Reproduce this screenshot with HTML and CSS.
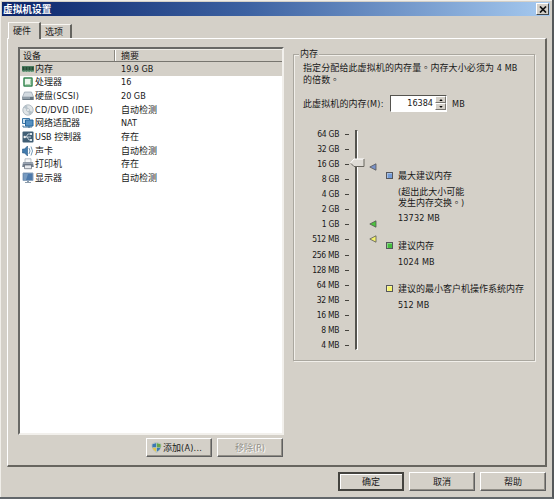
FILE: index.html
```html
<!DOCTYPE html>
<html lang="zh-CN">
<head>
<meta charset="utf-8">
<title>虚拟机设置</title>
<link rel="stylesheet" href="styles.css">
</head>
<body>
<div class="window">
  <header class="titlebar"><h1>虚拟机设置</h1>
    <button class="close" aria-label="关闭"><svg width="8" height="7" viewBox="0 0 8 7"><path d="M1 .5 7 6.5M7 .5 1 6.5" stroke="#111" stroke-width="1.7"/></svg></button>
  </header>
  <nav class="tabs"><div class="tab active">硬件</div><div class="tab">选项</div></nav>
  <main class="panel">
    <section class="left">
      <div class="list">
        <div class="head"><span class="dev">设备</span><span class="sum">摘要</span></div>
        <div class="row selected"><svg class="icon" viewBox="0 0 12 12"><path fill="#4b7b5f" d="M0 3h12v6H0z"/><path stroke="#244b35" stroke-width="2" d="M1.5 4v3M4.5 4v3M7.5 4v3M10.5 4v3"/><path stroke="#91b69c" d="M0 8.5h12" stroke-dasharray="1 .6"/></svg><span class="dev">内存</span><span>19.9 GB</span></div>
        <div class="row"><svg class="icon" viewBox="0 0 12 12"><rect x="2" y="2" width="8" height="8" rx=".5" fill="#eef7ee" stroke="#348650" stroke-width="1.5"/><path d="M3.5 8.5h5v-5" fill="none" stroke="#a9cfae"/></svg><span class="dev">处理器</span><span>16</span></div>
        <div class="row"><svg class="icon" viewBox="0 0 12 12"><path d="m2.5 2-2 5h11l-2-5z" fill="#d3dae0" stroke="#8896a2" stroke-width=".6"/><path d="M.3 7h11.4v3H.3z" fill="#667480"/><path d="M1 8h7" stroke="#bac7d0"/></svg><span class="dev">硬盘<span class="wide">(SCSI)</span></span><span>20 GB</span></div>
        <div class="row"><svg class="icon" viewBox="0 0 12 12"><circle cx="6" cy="6" r="5.2" fill="#dfe4e7" stroke="#a3b0b9" stroke-width=".8"/><path d="M6 6 1.5 3.5A5 5 0 0 1 5 1z" fill="#b7c3cb"/><path d="m6 6 4.7 2A5 5 0 0 1 7 10.8z" fill="#b4c1c8"/><circle cx="6" cy="6" r="1.4" fill="#fff" stroke="#9facb5" stroke-width=".7"/></svg><span class="dev wide">CD/DVD (IDE)</span><span>自动检测</span></div>
        <div class="row"><svg class="icon" viewBox="0 0 12 12"><path d="M.5 1.5h7v5h-7z" fill="#cbe1f0" stroke="#3c77a7"/><path d="M3.5 3h7.5v6H3.5z" fill="#5590c1" stroke="#25679d"/><path d="M1 8.5V10h9M7 9v2" fill="none" stroke="#356b94"/></svg><span class="dev">网络适配器</span><span>NAT</span></div>
        <div class="row"><svg class="icon" viewBox="0 0 12 12"><rect x=".5" y=".5" width="11" height="11" rx="1" fill="#405e75"/><path d="M2 6h7M4 6l2-3h2M5 6l2 3h2" fill="none" stroke="#e0e8ed" stroke-width=".8"/><circle cx="2.7" cy="6" r="1.2" fill="#eee"/><path d="M8 2h2v2H8zM8 8h2v2H8z" fill="#dce5eb"/></svg><span class="dev">USB 控制器</span><span>存在</span></div>
        <div class="row"><svg class="icon" viewBox="0 0 12 12"><path d="M.5 4h2l3-3v10l-3-3h-2z" fill="#427bad" stroke="#285984" stroke-width=".6"/><path d="M7 3q2 3 0 6M9 1.5q3 4.5 0 9" fill="none" stroke="#769bb8"/></svg><span class="dev">声卡</span><span>自动检测</span></div>
        <div class="row"><svg class="icon" viewBox="0 0 12 12"><path d="M3 .8h6V5H3z" fill="#f6f7f8" stroke="#9ba4ad" stroke-width=".7"/><path d="M1 4.2h10l.8 4.7H.2z" fill="#727f8e"/><path d="M2.5 7h7v3.7h-7z" fill="#e6e9ed" stroke="#5c6673" stroke-width=".7"/><path d="M1 5.3h10" stroke="#b9c3ce" stroke-width=".7"/></svg><span class="dev">打印机</span><span>存在</span></div>
        <div class="row"><svg class="icon" viewBox="0 0 12 12"><path d="M1 1h10v7.5H1z" fill="#4d79ab" stroke="#8ba3bd"/><path d="M2 2h4L4 8H2z" fill="#789bc0"/><path d="M5 9h2v1h2v1H3v-1h2z" fill="#8c9cab"/></svg><span class="dev">显示器</span><span>自动检测</span></div>
      </div>
      <div class="actions"><button class="btn add"><svg width="11" height="11" viewBox="0 0 12 12"><path d="M6 .5 10.8 2Q11.4 8.5 6 11.5.6 8.5 1.2 2z" fill="#f0f2e5" stroke="#8a9da4" stroke-width=".5"/><path d="M5.7 1.2V6H1.5q-.2-2 0-3.5z" fill="#3c77b2"/><path d="M6.2 1.2V6h4.3q.2-2 0-3.5z" fill="#66a54a"/><path d="M5.7 6.4v4.4Q2 8.8 1.6 6.4z" fill="#dfc34c"/><path d="M6.2 6.4v4.4q3.7-2 4.2-4.4z" fill="#3b79b0"/></svg><span>添加<span class="wide">(A)...</span></span></button><button class="btn disabled">移除(R)</button></div>
    </section>
    <fieldset class="memory">
      <legend>内存</legend>
      <p class="intro">指定分配给此虚拟机的内存量<span class="stop" lang="zh-TW">。</span>内存大小必须为 4 MB<br>的倍数<span class="stop" lang="zh-TW">。</span></p>
      <div class="amount"><span class="label">此虚拟机的内存<span class="wide">(M):</span></span><div class="number"><span>16384</span><div class="spin"><i><svg viewBox="0 0 5 3"><path d="M0 3 2.5 0 5 3"/></svg></i><i><svg viewBox="0 0 5 3"><path d="m0 0 2.5 3L5 0"/></svg></i></div></div><span class="wide">MB</span></div>
      <div class="body">
        <div class="scale"><span>64 GB</span><span>32 GB</span><span>16 GB</span><span>8 GB</span><span>4 GB</span><span>2 GB</span><span>1 GB</span><span>512 MB</span><span>256 MB</span><span>128 MB</span><span>64 MB</span><span>32 MB</span><span>16 MB</span><span>8 MB</span><span>4 MB</span></div>
        <div class="slider"><div class="track"></div>
          <svg class="thumb" width="15" height="10" viewBox="0 0 15 10"><path d="M.5 5 4 1h10v7.5H4z" fill="#dedbd5"/><path d="M.5 5 4 1h10" fill="none" stroke="#fff"/><path d="M1 5.5 4 8.5h10V1" fill="none" stroke="#68665f"/></svg>
          <svg class="mark blue" width="8" height="8" viewBox="0 0 8 8"><path d="M.8 4 7 .8v6.4z"/></svg>
          <svg class="mark green" width="8" height="8" viewBox="0 0 8 8"><path d="M.8 4 7 .8v6.4z"/></svg>
          <svg class="mark yellow" width="8" height="8" viewBox="0 0 8 8"><path d="M.8 4 7 .8v6.4z"/></svg>
        </div>
        <div class="legend">
          <div class="item max"><b class="swatch blue"></b><div><p>最大建议内存</p><p class="note">(超出此大小可能<br>发生内存交换<span class="stop" lang="zh-TW">。</span>)</p><p class="val">13732 MB</p></div></div>
          <div class="item rec"><b class="swatch green"></b><div><p>建议内存</p><p class="val">1024 MB</p></div></div>
          <div class="item"><b class="swatch yellow"></b><div><p>建议的最小客户机操作系统内存</p><p class="val">512 MB</p></div></div>
        </div>
      </div>
    </fieldset>
  </main>
  <footer><button class="btn default">确定</button><button class="btn">取消</button><button class="btn">帮助</button></footer>
</div>
</body>
</html>
```
FILE: styles.css
```css
* { box-sizing: border-box; }
body {
  margin: 0;
  background: #d4d0c8;
  color: #181818;
  font: 9px/12px "DejaVu Sans Condensed", "DejaVu Sans", "Noto Sans CJK SC", sans-serif;
  font-stretch: condensed;
  white-space: nowrap;
}
p, h1 { margin: 0; }
svg { display: block; flex: none; }
.wide { letter-spacing: .25px; }
.stop { font-family: "Noto Sans CJK TC", sans-serif; }
.window {
  width: 554px;
  height: 499px;
  overflow: hidden;
  padding: 2px 2px 0 2px;
  border-right: 2px solid #55585a;
  border-bottom: 2px solid #62676b;
  box-shadow: inset 1px 1px #f0eee9;
}
.titlebar {
  display: flex;
  align-items: center;
  justify-content: space-between;
  height: 14px;
  padding: 0 1px 0 1px;
  color: #fff;
  background: linear-gradient(90deg, #0a246a, #3d62a2 45%, #a6caf0);
}
.titlebar h1 { font-size: 9.7px; line-height: 13px; font-weight: 700; }
.close {
  display: grid;
  place-items: center;
  width: 13px;
  height: 12px;
  padding: 0;
  background: #d4d0c8;
  border: 1px solid;
  border-color: #fff #44484b #44484b #fff;
}
.tabs { display: flex; align-items: flex-end; height: 22px; padding-left: 6px; }
.tab {
  width: 31px;
  height: 14px;
  padding-left: 4px;
  line-height: 14px;
  border-top: 1px solid #f7f5f1;
  border-right: 2px solid #65645f;
}
.tab.active {
  width: 33px;
  height: 17px;
  margin-bottom: -1px;
  line-height: 16px;
  background: #d4d0c8;
  border-left: 1px solid #fff;
}
.panel {
  display: flex;
  width: 540px;
  height: 429px;
  margin-left: 5px;
  padding: 8px 10px 0 10px;
  border: 1px solid;
  border-color: #fff #67655f #67655f #fff;
  border-right-width: 2px;
  border-bottom-width: 2px;
}
.left { width: 266px; }
.list {
  width: 266px;
  height: 388px;
  background: #fff;
  border: 2px solid;
  border-color: #686865 #f2f0ec #f2f0ec #686865;
}
.head {
  display: flex;
  height: 13px;
  background: #d4d0c8;
  border-bottom: 1px solid #77756f;
  border-top: 1px solid #eeece6;
}
.head .dev { width: 95px; padding-left: 3px; border-right: 1px solid #8c8981; }
.head .sum { flex: 1; padding-left: 5px; border-left: 1px solid #fff; }
.row { display: flex; align-items: center; height: 13.65px; padding-left: 2px; }
.row.selected { background: #d4d0c8; }
.row .icon { width: 12px; height: 12px; margin-right: 1px; }
.row .dev { width: 86px; }
.actions { display: flex; justify-content: flex-end; gap: 5px; padding: 3px 1px 0 0; }
.btn {
  display: flex;
  align-items: center;
  justify-content: center;
  gap: 2px;
  width: 66px;
  height: 19px;
  padding: 0;
  font: inherit;
  color: #181818;
  background: #d4d0c8;
  border: 1px solid;
  border-color: #fff #606060 #606060 #fff;
  box-shadow: inset -1px -1px #918e87;
}
.btn.add { justify-content: flex-start; gap: 1px; padding-left: 4px; }
.btn.disabled { color: #929088; text-shadow: 1px 1px #fff; }
.btn.default { border: 2px solid #44433f; box-shadow: inset 1px 1px #fff; }
.memory {
  position: relative;
  width: 242px;
  height: 307px;
  min-width: 0;
  margin: 7px 0 0 9px;
  padding: 10px 0 0 9px;
  border: 1px solid #aaa79f;
  box-shadow: inset 1px 1px #f1efea, 1px 1px #f1efea;
}
.memory legend {
  position: absolute;
  top: -7px;
  left: 5px;
  padding: 0 1px;
  background: #d4d0c8;
}
.intro { line-height: 11px; margin-top: -3px; height: 27px; letter-spacing: .1px; }
.amount { display: flex; align-items: center; height: 17px; margin-top: 6px; }
.label { width: 87px; letter-spacing: .1px; }
.number {
  display: flex;
  justify-content: flex-end;
  width: 57px;
  height: 17px;
  margin-right: 5px;
  line-height: 14px;
  background: #fff;
  border: 1px solid;
  border-color: #55544f #fff #fff #55544f;
}
.spin { display: grid; grid-template-rows: 7px 7px; width: 11px; margin-left: 2px; }
.spin i {
  display: grid;
  place-items: center;
  background: #d4d0c8;
  border: 1px solid;
  border-color: #fff #77756f #77756f #fff;
}
.spin svg { width: 4px; height: 2px; }
.body { display: flex; margin-top: 15px; }
.scale {
  display: grid;
  grid-auto-rows: 15.07px;
  width: 36px;
  font-size: 8.5px;
  line-height: 15px;
  letter-spacing: -.4px;
  word-spacing: .3px;
}
.scale span { display: flex; justify-content: flex-end; align-items: center; width: 36px; }
.scale span::after { content: ""; width: 4px; height: 1px; margin-left: 6px; margin-right: -10px; background: #44423d; }
.slider { position: relative; width: 46px; height: 226px; }
.track {
  width: 3px;
  height: 220px;
  margin: 3px 0 0 16px;
  border: 1px solid;
  border-color: #55544f #fff #fff #55544f;
  border-left-width: 2px;
}
.thumb, .mark { position: absolute; }
.thumb { left: 11px; top: 31px; }
.mark { left: 30px; stroke: #555; stroke-width: .8; }
.mark.blue { top: 36px; fill: #7991c7; }
.mark.green { top: 93px; fill: #4dc33f; }
.mark.yellow { top: 108px; fill: #f6f36a; }
.legend { width: 148px; padding: 43px 0 0 1px; }
.item { display: flex; gap: 5px; }
.item.max { height: 70px; }
.item.rec { height: 43px; }
.swatch { flex: none; width: 7px; height: 7px; margin-top: 2px; border: 1px solid #55565c; box-shadow: inset 1px 1px rgba(255,255,255,.35); }
.swatch.blue { background: #739bd6; }
.swatch.green { background: #46bd3f; }
.swatch.yellow { background: #f5f16d; }
.note { margin-top: 5px; line-height: 10.5px; }
.val { margin-top: 4px; letter-spacing: .15px; }
footer { display: flex; justify-content: flex-end; gap: 5px; padding: 5px 4px 0 0; }
```
